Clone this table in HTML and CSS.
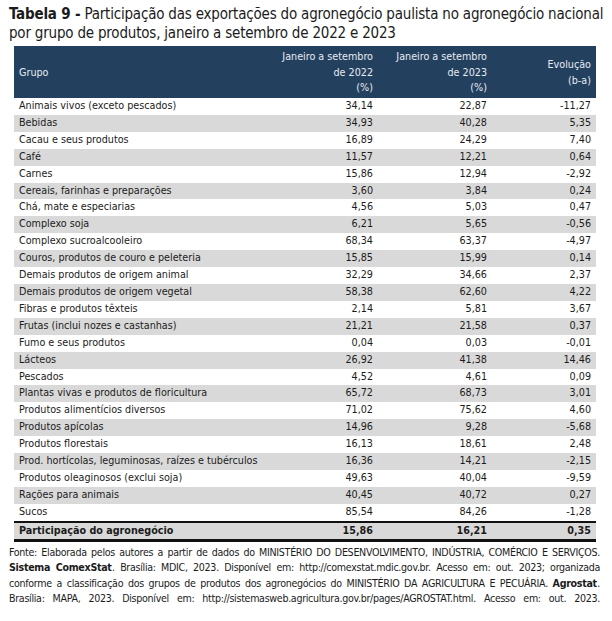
FILE: index.html
```html
<!DOCTYPE html>
<html lang="pt-BR">
<head>
<meta charset="utf-8">
<link rel="stylesheet" href="styles.css">
</head>
<body>
<div class="page">
  <h1 class="title"><b>Tabela 9 -</b> Participação das exportações do agronegócio paulista no agronegócio nacional<br>por grupo de produtos, janeiro a setembro de 2022 e 2023</h1>
  <table class="data">
    <thead>
      <tr>
        <th class="c-name">Grupo</th>
        <th class="c-num c2">Janeiro a setembro<br>de 2022<br>(%)</th>
        <th class="c-num c3">Janeiro a setembro<br>de 2023<br>(%)</th>
        <th class="c-num c4">Evolução<br>(b-a)</th>
      </tr>
    </thead>
    <tbody>
      <tr><td>Animais vivos (exceto pescados)</td><td>34,14</td><td>22,87</td><td>-11,27</td></tr>
      <tr><td>Bebidas</td><td>34,93</td><td>40,28</td><td>5,35</td></tr>
      <tr><td>Cacau e seus produtos</td><td>16,89</td><td>24,29</td><td>7,40</td></tr>
      <tr><td>Café</td><td>11,57</td><td>12,21</td><td>0,64</td></tr>
      <tr><td>Carnes</td><td>15,86</td><td>12,94</td><td>-2,92</td></tr>
      <tr><td>Cereais, farinhas e preparações</td><td>3,60</td><td>3,84</td><td>0,24</td></tr>
      <tr><td>Chá, mate e especiarias</td><td>4,56</td><td>5,03</td><td>0,47</td></tr>
      <tr><td>Complexo soja</td><td>6,21</td><td>5,65</td><td>-0,56</td></tr>
      <tr><td>Complexo sucroalcooleiro</td><td>68,34</td><td>63,37</td><td>-4,97</td></tr>
      <tr><td>Couros, produtos de couro e peleteria</td><td>15,85</td><td>15,99</td><td>0,14</td></tr>
      <tr><td>Demais produtos de origem animal</td><td>32,29</td><td>34,66</td><td>2,37</td></tr>
      <tr><td>Demais produtos de origem vegetal</td><td>58,38</td><td>62,60</td><td>4,22</td></tr>
      <tr><td>Fibras e produtos têxteis</td><td>2,14</td><td>5,81</td><td>3,67</td></tr>
      <tr><td>Frutas (inclui nozes e castanhas)</td><td>21,21</td><td>21,58</td><td>0,37</td></tr>
      <tr><td>Fumo e seus produtos</td><td>0,04</td><td>0,03</td><td>-0,01</td></tr>
      <tr><td>Lácteos</td><td>26,92</td><td>41,38</td><td>14,46</td></tr>
      <tr><td>Pescados</td><td>4,52</td><td>4,61</td><td>0,09</td></tr>
      <tr><td>Plantas vivas e produtos de floricultura</td><td>65,72</td><td>68,73</td><td>3,01</td></tr>
      <tr><td>Produtos alimentícios diversos</td><td>71,02</td><td>75,62</td><td>4,60</td></tr>
      <tr><td>Produtos apícolas</td><td>14,96</td><td>9,28</td><td>-5,68</td></tr>
      <tr><td>Produtos florestais</td><td>16,13</td><td>18,61</td><td>2,48</td></tr>
      <tr><td>Prod. hortícolas, leguminosas, raízes e tubérculos</td><td>16,36</td><td>14,21</td><td>-2,15</td></tr>
      <tr><td>Produtos oleaginosos (exclui soja)</td><td>49,63</td><td>40,04</td><td>-9,59</td></tr>
      <tr><td>Rações para animais</td><td>40,45</td><td>40,72</td><td>0,27</td></tr>
      <tr><td>Sucos</td><td>85,54</td><td>84,26</td><td>-1,28</td></tr>
    </tbody>
    <tfoot>
      <tr><td>Participação do agronegócio</td><td>15,86</td><td>16,21</td><td>0,35</td></tr>
    </tfoot>
  </table>
  <p class="source">Fonte: Elaborada pelos autores a partir de dados do MINISTÉRIO DO DESENVOLVIMENTO, INDÚSTRIA, COMÉRCIO E SERVIÇOS. <b>Sistema ComexStat</b>. Brasília: MDIC, 2023. Disponível em: http://comexstat.mdic.gov.br. Acesso em: out. 2023; organizada conforme a classificação dos grupos de produtos dos agronegócios do MINISTÉRIO DA AGRICULTURA E PECUÁRIA. <b>Agrostat</b>. Brasília: MAPA, 2023. Disponível em: http://sistemasweb.agricultura.gov.br/pages/AGROSTAT.html. Acesso em: out. 2023.</p>
</div>
</body>
</html>
```
FILE: styles.css
```css
html, body {
  margin: 0;
  padding: 0;
  background: #ffffff;
}
body {
  font-family: "DejaVu Sans Condensed", "DejaVu Sans", sans-serif;
  font-stretch: condensed;
  color: #1b1b1b;
}
.page {
  padding: 5px 8px 0 9px;
}
.title {
  margin: 0;
  font-size: 15px;
  font-weight: normal;
  line-height: 19px;
  letter-spacing: -0.2px;
  white-space: nowrap;
}
.title b {
  font-weight: bold;
}
.data {
  margin: 3px 0 0 5px;
  width: 582px;
  border-collapse: collapse;
  font-size: 10.7px;
}
.data th {
  background: #24405f;
  color: #e6ebf1;
  font-weight: normal;
  line-height: 15.5px;
  height: 51px;
  padding: 1px 5px 0;
  vertical-align: middle;
}
.data th.c-name { text-align: left; padding-left: 5px; }
.data th.c-num { text-align: right; }
.c2 { width: 98px; }
.c3 { width: 104px; }
.c4 { width: 94px; }
.data td {
  height: 16.9px;
  padding: 0 5px;
  line-height: 16.9px;
  white-space: nowrap;
}
.data td + td { text-align: right; }
.data tbody tr:nth-child(even) td { background: #d9d9d9; }
.data tfoot td {
  background: #d9d9d9;
  font-weight: bold;
  border-top: 2px solid #111;
  border-bottom: 3px solid #111;
  height: 16px;
  line-height: 16px;
}
.source {
  margin: 3px 0 0 0;
  font-size: 10.6px;
  letter-spacing: -0.3px;
  word-spacing: -0.3px;
  line-height: 15.5px;
  text-align: justify;
  text-align-last: justify;
  width: 591px;
}
.source b {
  margin-right: 0.4px;
}
```
